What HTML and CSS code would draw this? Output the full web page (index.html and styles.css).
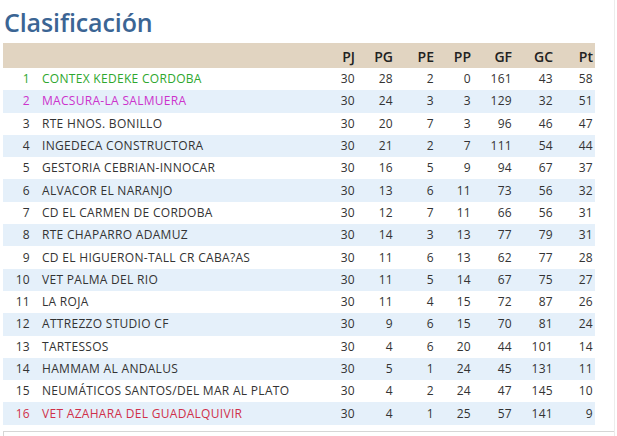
FILE: index.html
```html
<!DOCTYPE html>
<html lang="es">
<head>
<meta charset="utf-8">
<title>Clasificación</title>
<link rel="stylesheet" href="styles.css">
</head>
<body>
<div class="page">
  <h1 class="title">Clasificación</h1>
  <table class="standings">
    <thead>
      <tr>
        <th class="pos"></th>
        <th class="team"></th>
        <th class="n c1">PJ</th>
        <th class="n c2">PG</th>
        <th class="n c3">PE</th>
        <th class="n c4">PP</th>
        <th class="n c5">GF</th>
        <th class="n c6">GC</th>
        <th class="n c7">Pt</th>
      </tr>
    </thead>
    <tbody>
      <tr class="up"><td class="pos">1</td><td class="team">CONTEX KEDEKE CORDOBA</td><td class="n">30</td><td class="n">28</td><td class="n">2</td><td class="n">0</td><td class="n">161</td><td class="n">43</td><td class="n last">58</td></tr>
      <tr class="alt promo"><td class="pos">2</td><td class="team">MACSURA-LA SALMUERA</td><td class="n">30</td><td class="n">24</td><td class="n">3</td><td class="n">3</td><td class="n">129</td><td class="n">32</td><td class="n last">51</td></tr>
      <tr><td class="pos">3</td><td class="team">RTE HNOS. BONILLO</td><td class="n">30</td><td class="n">20</td><td class="n">7</td><td class="n">3</td><td class="n">96</td><td class="n">46</td><td class="n last">47</td></tr>
      <tr class="alt"><td class="pos">4</td><td class="team">INGEDECA CONSTRUCTORA</td><td class="n">30</td><td class="n">21</td><td class="n">2</td><td class="n">7</td><td class="n">111</td><td class="n">54</td><td class="n last">44</td></tr>
      <tr><td class="pos">5</td><td class="team">GESTORIA CEBRIAN-INNOCAR</td><td class="n">30</td><td class="n">16</td><td class="n">5</td><td class="n">9</td><td class="n">94</td><td class="n">67</td><td class="n last">37</td></tr>
      <tr class="alt"><td class="pos">6</td><td class="team">ALVACOR EL NARANJO</td><td class="n">30</td><td class="n">13</td><td class="n">6</td><td class="n">11</td><td class="n">73</td><td class="n">56</td><td class="n last">32</td></tr>
      <tr><td class="pos">7</td><td class="team">CD EL CARMEN DE CORDOBA</td><td class="n">30</td><td class="n">12</td><td class="n">7</td><td class="n">11</td><td class="n">66</td><td class="n">56</td><td class="n last">31</td></tr>
      <tr class="alt"><td class="pos">8</td><td class="team">RTE CHAPARRO ADAMUZ</td><td class="n">30</td><td class="n">14</td><td class="n">3</td><td class="n">13</td><td class="n">77</td><td class="n">79</td><td class="n last">31</td></tr>
      <tr><td class="pos">9</td><td class="team">CD EL HIGUERON-TALL CR CABA?AS</td><td class="n">30</td><td class="n">11</td><td class="n">6</td><td class="n">13</td><td class="n">62</td><td class="n">77</td><td class="n last">28</td></tr>
      <tr class="alt"><td class="pos">10</td><td class="team">VET PALMA DEL RIO</td><td class="n">30</td><td class="n">11</td><td class="n">5</td><td class="n">14</td><td class="n">67</td><td class="n">75</td><td class="n last">27</td></tr>
      <tr><td class="pos">11</td><td class="team">LA ROJA</td><td class="n">30</td><td class="n">11</td><td class="n">4</td><td class="n">15</td><td class="n">72</td><td class="n">87</td><td class="n last">26</td></tr>
      <tr class="alt"><td class="pos">12</td><td class="team">ATTREZZO STUDIO CF</td><td class="n">30</td><td class="n">9</td><td class="n">6</td><td class="n">15</td><td class="n">70</td><td class="n">81</td><td class="n last">24</td></tr>
      <tr><td class="pos">13</td><td class="team">TARTESSOS</td><td class="n">30</td><td class="n">4</td><td class="n">6</td><td class="n">20</td><td class="n">44</td><td class="n">101</td><td class="n last">14</td></tr>
      <tr class="alt"><td class="pos">14</td><td class="team">HAMMAM AL ANDALUS</td><td class="n">30</td><td class="n">5</td><td class="n">1</td><td class="n">24</td><td class="n">45</td><td class="n">131</td><td class="n last">11</td></tr>
      <tr><td class="pos">15</td><td class="team">NEUMÁTICOS SANTOS/DEL MAR AL PLATO</td><td class="n">30</td><td class="n">4</td><td class="n">2</td><td class="n">24</td><td class="n">47</td><td class="n">145</td><td class="n last">10</td></tr>
      <tr class="alt down"><td class="pos">16</td><td class="team">VET AZAHARA DEL GUADALQUIVIR</td><td class="n">30</td><td class="n">4</td><td class="n">1</td><td class="n">25</td><td class="n">57</td><td class="n">141</td><td class="n last">9</td></tr>
    </tbody>
  </table>
  <div class="footer-box"></div>
</div>
</body>
</html>
```

FILE: styles.css
```css
html, body {
  margin: 0;
  padding: 0;
  background: #ffffff;
}

body {
  font-family: "Open Sans", "DejaVu Sans", sans-serif;
  color: #333333;
  overflow: hidden;
}

.page {
  width: 615px;
  padding: 0 0 0 3px;
  border-right: 1px solid #ececec;
  height: 436px;
  box-sizing: border-box;
}

.title {
  margin: 0;
  padding: 6px 0 0 1px;
  height: 38px;
  box-sizing: border-box;
  font-size: 25px;
  font-weight: 600;
  color: #3b6594;
  line-height: 32px;
  letter-spacing: -0.1px;
}

.standings {
  width: 592px;
  border-collapse: collapse;
  border-spacing: 0;
  font-size: 12px;
  margin-top: 5px;
}

.standings thead tr {
  background: #e1d4c1;
  height: 25px;
}

.standings th {
  font-size: 14px;
  font-weight: 600;
  color: #222222;
  padding: 2px 0 0 0;
  line-height: 20px;
  text-align: right;
}

.standings tbody tr {
  height: 22.3px;
}

.standings td {
  padding: 0;
  line-height: 16px;
  color: #333333;
  white-space: nowrap;
  letter-spacing: 0.3px;
}

.standings tr.alt {
  background: #e5f0fa;
}

.pos {
  width: 27px;
  text-align: right;
}

.standings td.pos {
  padding-right: 12px;
}

.team {
  text-align: left;
}

.n {
  text-align: right;
}

.c1 { width: 34px; }
.c2 { width: 38px; }
.c3 { width: 41px; }
.c4 { width: 37px; }
.c5 { width: 41px; }
.c6 { width: 41px; }
.c7 { width: 40px; }

.standings th.c7,
.standings td.last {
  padding-right: 2px;
}

.standings tr.up td { color: #2ea72e; }
.standings tr.promo td.pos,
.standings tr.promo td.team { color: #cc33cc; }
.standings tr.promo td.n { color: #333333; }
.standings tr.up td.n { color: #333333; }
.standings tr.down td.pos,
.standings tr.down td.team { color: #d0304a; }

.footer-box {
  margin-top: 6px;
  height: 10px;
  border-top: 1px solid #d6d6d6;
  border-left: 1px solid #d6d6d6;
}
```
